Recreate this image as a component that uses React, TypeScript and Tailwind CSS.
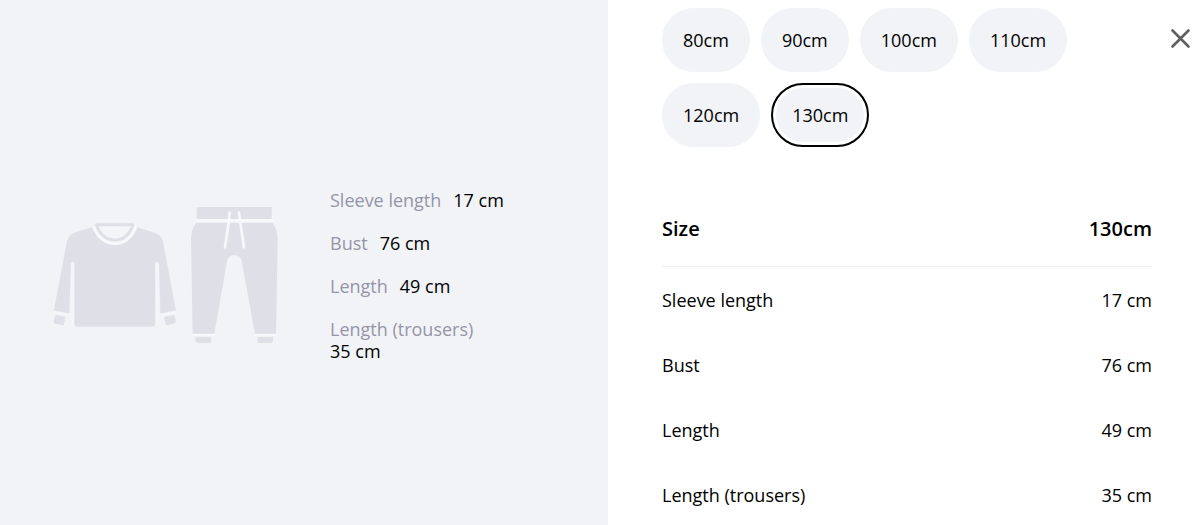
import { useState } from "react";

const sizes = ["80cm", "90cm", "100cm", "110cm", "120cm", "130cm"];

const measurements = [
  { label: "Sleeve length", value: "17 cm" },
  { label: "Bust", value: "76 cm" },
  { label: "Length", value: "49 cm" },
  { label: "Length (trousers)", value: "35 cm" },
];

function SweaterIcon() {
  return (
    <svg viewBox="36 78 378 324" className="h-[108px] w-[126px] shrink-0" aria-hidden="true">
      <g stroke="#f5f6fa" strokeWidth="2" strokeLinejoin="round" fill="#dedfe7">
        <path d="M156 95 L104 112 Q85 119 80 138 L40 347 L89 357 L94 205 Q98 196 102 205 L102 386 Q102 396 111 396 L338 396 Q347 396 347 386 L347 205 Q351 196 356 205 L360 357 L409 347 L370 138 Q365 120 346 113 L292 95 C278 130 256 148 225 149 C193 148 171 132 156 95 Z" />
        <path d="M46 358 L78 365 L72 393 L45 387 Q37 384 40 376 Z" />
        <path d="M403 358 L371 365 L377 393 L402 387 Q411 384 409 376 Z" />
      </g>
      <path d="M98 206 L97 387" stroke="#f5f6fa" strokeWidth="8" strokeLinecap="round" />
      <path d="M351 206 L352 387" stroke="#f5f6fa" strokeWidth="8" strokeLinecap="round" />
      <path d="M44 353 L86 361 M405 353 L363 361" stroke="#f5f6fa" strokeWidth="7" strokeLinecap="round" />
      <path d="M161 94 C175 126 195 145 225 145 C254 145 275 126 288 94" fill="none" stroke="#f7f8fb" strokeWidth="9" />
      <path
        d="M169 89 L279 89 C268 120 248 135 225 135 C201 135 180 120 169 89 Z"
        fill="#f4f5f9"
        stroke="#dedfe7"
        strokeWidth="9"
        strokeLinejoin="round"
      />
    </svg>
  );
}

function TrousersIcon() {
  return (
    <svg viewBox="30 30 270 420" className="h-[140px] w-[90px] shrink-0" aria-hidden="true">
      <g fill="#dedfe7">
        <path d="M50 36 H275 V72 H50 Z" />
        <path d="M48 83 H278 Q292 105 293 132 L288 416 H225 L185 198 Q182 180 162 180 Q145 180 141 198 L103 416 H38 L33 132 Q34 105 48 83 Z" />
        <path d="M47 426 H93 V444 H52 L46 438 Z" />
        <path d="M233 426 H279 V438 L274 444 H233 Z" />
      </g>
      <g stroke="#f7f8fb" strokeLinecap="round" fill="none">
        <path d="M46 77 H280" strokeWidth="8" />
        <path d="M149 53 L146 84 L135 157" strokeWidth="8" />
        <path d="M177 53 L181 84 L192 157" strokeWidth="8" />
        <path d="M38 420 H103 M225 420 H288" strokeWidth="6" />
      </g>
    </svg>
  );
}

export default function App() {
  const [selected, setSelected] = useState("130cm");

  return (
    <main className="relative grid min-h-screen grid-cols-[608fr_587fr] bg-white font-['Open_Sans','Noto_Sans',sans-serif] text-lg leading-[22px] text-black">
      <section aria-label="Garment measurements" className="flex items-center bg-[#f1f3f7] pt-6 pl-[52px]">
        <div className="flex items-center gap-3">
          <SweaterIcon />
          <TrousersIcon />
        </div>
        <dl className="ml-[50px] flex w-[190px] flex-col gap-[21px] pt-0.5">
          {measurements.map((m) => (
            <div key={m.label} className="flex flex-wrap gap-x-3">
              <dt className="text-[#9595a9]">{m.label}</dt>
              <dd>{m.value}</dd>
            </div>
          ))}
        </dl>
      </section>

      <section aria-label="Size guide" className="pt-2 pr-[43px] pl-[54px]">
        <div className="flex max-w-[420px] flex-wrap gap-[11px]">
          {sizes.map((size) => (
            <button
              key={size}
              type="button"
              aria-pressed={selected === size}
              onClick={() => setSelected(size)}
              className={
                selected === size
                  ? "h-16 rounded-full border-2 border-black bg-[#f1f3f7] px-[19px] inset-ring-3 inset-ring-white"
                  : "h-16 rounded-full border-2 border-[#f1f3f7] bg-[#f1f3f7] px-[19px]"
              }
            >
              {size}
            </button>
          ))}
        </div>

        <table className="mt-[45px] w-full border-collapse">
          <thead>
            <tr className="border-b border-[#f0f0f3] text-xl leading-[22px]">
              <th scope="col" className="py-[26px] text-left font-semibold">Size</th>
              <th scope="col" className="py-[26px] text-right font-semibold">{selected}</th>
            </tr>
          </thead>
          <tbody>
            {measurements.map((m) => (
              <tr key={m.label} className="group">
                <th scope="row" className="pt-[22px] pb-[21px] text-left font-normal group-last:pb-0">{m.label}</th>
                <td className="pt-[22px] pb-[21px] text-right group-last:pb-0">{m.value}</td>
              </tr>
            ))}
          </tbody>
        </table>
      </section>

      <button type="button" aria-label="Close" className="absolute top-[27px] right-[3px] flex size-6 items-center justify-center text-[#5f5f5f]">
        <svg viewBox="0 0 24 24" className="size-6" fill="none" stroke="currentColor" strokeWidth="2.6" strokeLinecap="round" aria-hidden="true">
          <path d="M4.5 3.5 L20.5 19.5 M20.5 3.5 L4.5 19.5" />
        </svg>
      </button>
    </main>
  );
}
